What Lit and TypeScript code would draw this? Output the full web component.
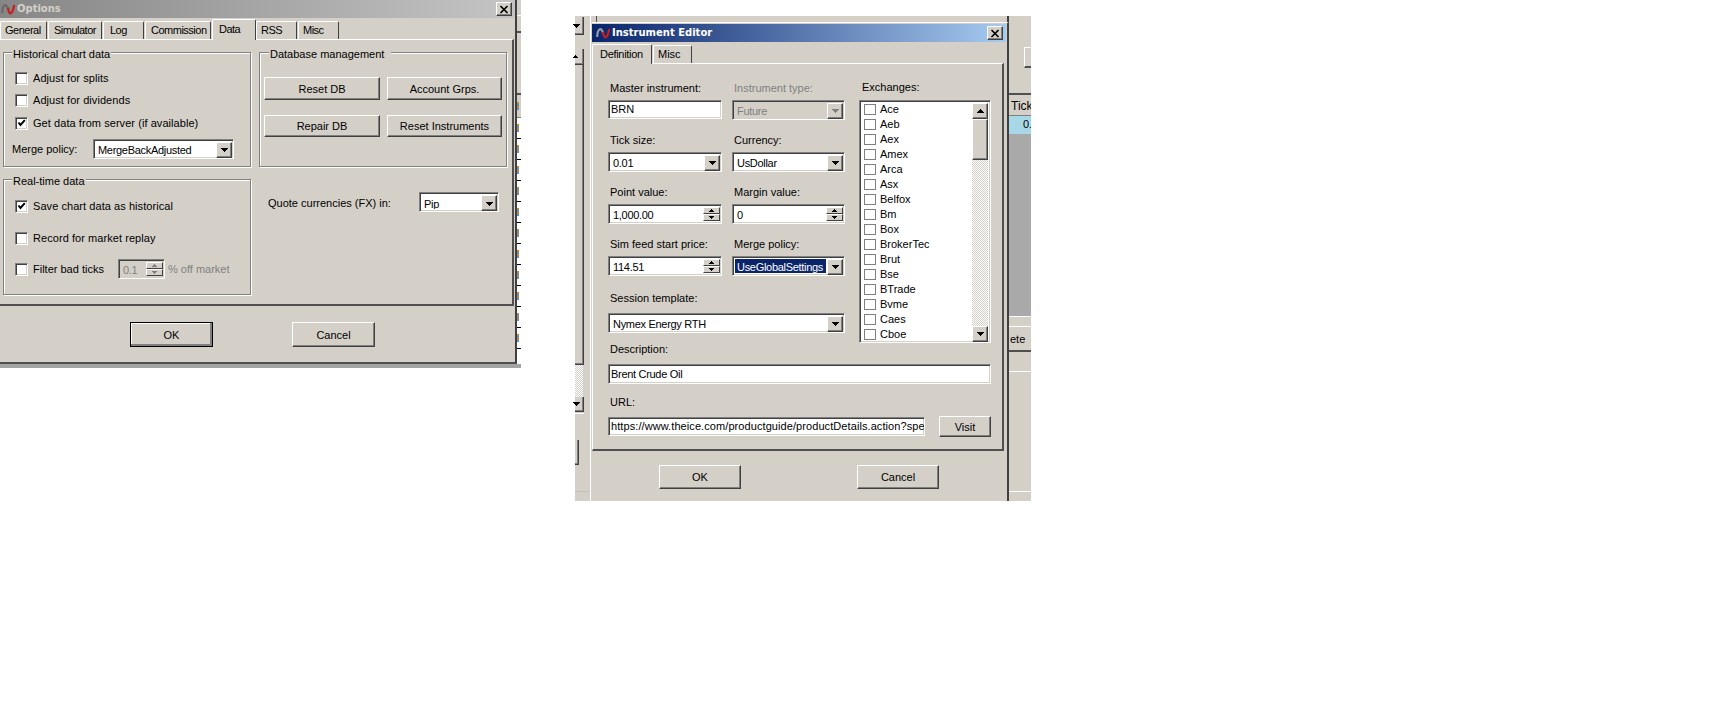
import { LitElement, html, css, TemplateResult } from "lit";
import { customElement } from "lit/decorators.js";

const EXCHANGES = ["Ace","Aeb","Aex","Amex","Arca","Asx","Belfox","Bm","Box","BrokerTec","Brut","Bse","BTrade","Bvme","Caes","Cboe"];
const OPT_TABS = [
  ["General", 47, 4], ["Simulator", 54, 5], ["Log", 41, 6], ["Commission", 66, 5],
];
const OPT_TABS2 = [["RSS", 41, 4], ["Misc", 41, 4]];

const tri = () => html`<svg class="tri" width="7" height="4" viewBox="0 0 7 4" shape-rendering="crispEdges"><path d="M0 0h7v1h-1v1h-1v1h-1v1h-1v-1h-1v-1h-1v-1h-1z"/></svg>`;
const triUp = () => html`<svg class="tri" width="7" height="4" viewBox="0 0 7 4" shape-rendering="crispEdges"><path d="M3 0h1v1h1v1h1v1h1v1h-7v-1h1v-1h1v-1h1z"/></svg>`;
const smallUp = () => html`<svg class="tri" width="5" height="3" viewBox="0 0 5 3" shape-rendering="crispEdges"><path d="M2 0h1v1h1v1h1v1h-5v-1h1v-1h1z"/></svg>`;
const smallDown = () => html`<svg class="tri" width="5" height="3" viewBox="0 0 5 3" shape-rendering="crispEdges"><path d="M0 0h5v1h-1v1h-1v1h-1v-1h-1v-1h-1z"/></svg>`;
const combo = (t: string, cls = "", sel = false) => html`<div class="combo inset ${cls}"><span class="ctext ${sel ? "sel" : ""}">${t}</span><span class="arrow raised">${tri()}</span></div>`;
const spin = (t: string, cls = "") => html`<div class="combo inset ${cls}"><span class="ctext">${t}</span><span class="spins"><span class="sb">${smallUp()}</span><span class="sb">${smallDown()}</span></span></div>`;
const field = (t: string, cls = "") => html`<div class="field inset ${cls}">${t}</div>`;
const check = (on: boolean) => html`<span class="cb inset">${on ? html`<svg width="9" height="9" viewBox="0 0 9 9"><path d="M1.5 3.5 L3.5 6 L7.8 1.2" fill="none" stroke="#000" stroke-width="2"/></svg>` : ""}</span>`;
const cbRow = (t: string, on: boolean, cls = ""): TemplateResult => html`<div class="cbrow ${cls}">${check(on)}<span>${t}</span></div>`;
const icon = (g: string) => html`<svg class="ico" width="15" height="14" viewBox="0 0 15 14"><path d="M1.2 11 C1.5 2 5.5 1 7 7" fill="none" stroke="${g}" stroke-width="2.2"/><path d="M7 6 C8 14 11.5 13 13.2 3" fill="none" stroke="#c8201c" stroke-width="2.2"/></svg>`;
const closeBtn = () => html`<span class="close raised"><svg width="10" height="9" viewBox="0 0 10 9"><path d="M1.5 1 L8.5 8 M8.5 1 L1.5 8" stroke="#000" stroke-width="1.7" fill="none"/></svg></span>`;

@customElement("app-root")
export class AppRoot extends LitElement {
  static styles = css`
    :host { display: block; width: 1711px; height: 727px; background: #fff; overflow: hidden;
      font: 11px/14px "Liberation Sans", Arial, sans-serif; color: #000; }
    * { box-sizing: border-box; }
    .desk { display: flex; align-items: flex-start; }
    .raised { border: 1px solid; border-color: #fff #404040 #404040 #fff;
      box-shadow: inset -1px -1px 0 #808080; background: #d4d0c8; }
    .inset { border: 1px solid; border-color: #808080 #fff #fff #808080;
      box-shadow: inset 1px 1px 0 #404040, inset -1px -1px 0 #d4d0c8; background: #fff; }
    .tri { display: block; fill: #000; }

    .shot1 { display: flex; width: 521px; align-items: flex-start; }
    .col1 { width: 517px; background: #a4a4a4; padding-bottom: 4px; }
    .win1 { background: #d4d0c8; height: 364px; border-right: 2px solid #404040; border-bottom: 2px solid #505050; }
    .title { display: flex; align-items: center; height: 18px; font: bold 10px/18px "DejaVu Sans", sans-serif; }
    .title.gray { background: linear-gradient(90deg, #868686, #c4c4c4); color: #d4d0c8; padding-left: 1px; }
    .title.blue { background: linear-gradient(90deg, #0a246a, #a6caf0); color: #fff; padding-left: 4px; margin-right: 1px; }
    .title .ico { flex: none; margin-right: 1px; }
    .title .ttl { flex: 1; }
    .close { width: 16px; height: 14px; margin-right: 3px; display: flex; align-items: center; justify-content: center; }
    .tabs { display: flex; height: 21px; align-items: flex-end; position: relative; z-index: 1; }
    .tab { height: 18px; background: #d4d0c8; border-top: 1px solid #fff; border-left: 1px solid #fff;
      border-right: 1px solid #404040; border-radius: 2px 2px 0 0; line-height: 17px; white-space: nowrap; flex: none; margin-right: 1px; }
    .tabs.tight .tab { letter-spacing: -0.5px; }
    .tab.on { height: 21px; margin-right: 0; margin-bottom: -1px; border-right-color: #404040; line-height: 18px; }
    .panel1 { width: 514px; height: 267px; border-top: 1px solid #fff; border-right: 2px solid #505050; border-bottom: 2px solid #505050;
      padding: 12px 0 0 3px; display: flex; gap: 8px; align-items: flex-start; }
    .gcol { width: 248px; display: flex; flex-direction: column; }
    .group { width: 248px; border: 1px solid #808080; box-shadow: inset 1px 1px 0 #fff, 1px 1px 0 #fff; padding-left: 11px; }
    .g115 { height: 115px; }
    .g116 { height: 116px; margin-top: 12px; }
    .legend { display: block; width: fit-content; margin: -6px 0 0 -3px; padding: 0 1px 0 1px; height: 14px; background: #d4d0c8; white-space: nowrap; }
    .legend.wide { padding-right: 7px; margin-left: -2px; }
    .cbrow { display: flex; align-items: center; height: 13px; line-height: 13px; white-space: nowrap; letter-spacing: 0.06px; }
    .cb { width: 13px; height: 13px; margin-right: 5px; flex: none; display: flex; align-items: center; justify-content: center; }
    .m11 { margin-top: 11px; } .m9 { margin-top: 9px; } .m10 { margin-top: 10px; } .m12 { margin-top: 12px; } .m19 { margin-top: 19px; }
    .mergerow { display: flex; align-items: center; margin: 9px 0 0 -3px; height: 20px; }
    .mergerow > span { width: 81px; }
    .combo { display: flex; height: 20px; padding: 2px 1px 2px 2px; align-items: stretch; flex: none; }
    .ctext { flex: 1; min-width: 0; padding-left: 2px; line-height: 16px; white-space: nowrap; overflow: hidden; letter-spacing: -0.3px; }
    .ctext.sel { background: #0a246a; color: #fff; margin-right: 1px; }
    .arrow { width: 16px; height: 16px; flex: none; display: flex; align-items: center; justify-content: center; }
    .spins { width: 17px; flex: none; display: flex; flex-direction: column; background: #d4d0c8; }
    .sb { height: 8px; display: flex; align-items: center; justify-content: center; border: 1px solid; border-color: #fff #404040 #404040 #fff; }
    .w141 { width: 141px; } .w80 { width: 80px; } .w47 { width: 47px; }
    .w114 { width: 114px; } .w113 { width: 113px; } .w237 { width: 237px; }
    .off { background: #d4d0c8; color: #808080; }
    .off .tri { fill: #808080; }
    .filter { display: flex; align-items: center; height: 20px; margin-top: 14px; white-space: nowrap; }
    .filter .ftxt { width: 85px; flex: none; line-height: 14px; }
    .filter .pct { margin-left: 3px; color: #808080; }
    .btngrid { display: grid; grid-template-columns: 116px 115px; grid-template-rows: 23px 22px; gap: 15px 7px; margin: 16px 0 0 -7px; }
    .btn { display: flex; align-items: center; justify-content: center; white-space: nowrap; flex: none; }
    .quote { display: grid; grid-template-columns: 151px 80px; align-items: center; margin: 25px 0 0 9px; }
    .quote span { padding-top: 1px; }
    .foot1 { display: flex; gap: 79px; padding: 16px 0 0 130px; }
    .dbtn { height: 25px; width: 83px; }
    .dbtn.def { outline: 1px solid #000; outline-offset: -1px; box-shadow: inset -2px -2px 0 #808080, inset 1px 1px 0 #fff; }
    .sliver { width: 4px; height: 368px; display: flex; flex-direction: column; overflow: hidden; }
    .s-top { height: 93px; background: #d4d0c8; padding-top: 15px; flex: none; }
    .s-top i { display: block; height: 18px; border-top: 1px solid #fff; border-bottom: 2px solid #505050; }
    .s-line { height: 2px; background: #505050; flex: none; }
    .s-head { height: 23px; background: #d4d0c8; border-bottom: 1px solid #808080; flex: none; padding-top: 7px; }
    .s-row { height: 21px; flex: none; border-bottom: 1px solid #000; padding-top: 6px; background: #fff; }
    .s-head i, .s-row i { display: block; width: 2px; height: 8px; background: repeating-linear-gradient(180deg, #c8842a 0 2px, #5a8fd0 2px 4px); }
    .s-fill { flex: 1; background: #fff; }
    .s-strip { height: 4px; flex: none; background: #a4a4a4; }

    .shot2 { display: flex; width: 456px; height: 485px; margin: 16px 0 0 54px; background: #d4d0c8; flex: none; }
    .lstrip { width: 16px; flex: none; border-right: 1px solid #fff; display: flex; flex-direction: column; height: 485px; }
    .lbox { width: 9px; border-right: 1px solid #404040; border-bottom: 1px solid #404040; box-shadow: inset -1px -1px 0 #808080; flex: none; display: flex; align-items: center; }
    .lbox .tri { margin-left: -2px; }
    .lb1 { height: 18px; margin-top: 1px; } .lb2 { height: 16px; margin-top: 14px; }
    .lb3 { height: 300px; border-left: 0; }
    .lchk { width: 8px; height: 32px; flex: none; background: repeating-conic-gradient(#d4d0c8 0 25%, #fff 0 50%) 0 0/2px 2px; }
    .lb4 { height: 15px; }
    .lwl { width: 9px; height: 1px; background: #fff; margin-top: 1px; flex: none; }
    .lb5 { width: 4px; height: 25px; margin-top: 26px; }
    .lgl { width: 15px; height: 1px; background: #c0c0c0; margin-top: 26px; flex: none; }
    .rmain { width: 418px; flex: none; display: flex; flex-direction: column; }
    .rtop { height: 6px; border-right: 2px solid #404040; }
    .rtop i { display: block; width: 1px; height: 6px; margin-left: 5px; background: #505050; }
    .win2 { height: 479px; border-top: 1px solid #fff; border-left: 1px solid #d4d0c8; border-right: 2px solid #404040; padding-top: 1px; background: #d4d0c8; }
    .panel2 { width: 412px; height: 388px; border-top: 1px solid #fff; border-left: 1px solid #fff; border-right: 2px solid #505050; border-bottom: 2px solid #505050; padding: 17px 0 0 15px; }
    .upper { display: flex; align-items: flex-start; }
    .fgrid { width: 237px; display: grid; grid-template-columns: 114px 113px; column-gap: 10px; row-gap: 13px; }
    .cell label, .blabel { display: block; height: 14px; padding-left: 2px; margin-bottom: 5px; white-space: nowrap; }
    .cell label.dis { color: #808080; }
    .blabel.b8 { margin-bottom: 8px; }
    .sess { margin-top: 15px; }
    .exch { width: 132px; margin: -1px 0 -1px 14px; flex: none; }
    .exch label { display: block; height: 14px; padding-left: 3px; margin-bottom: 6px; }
    .list { height: 243px; display: flex; padding: 2px; overflow: hidden; }
    .rows { flex: 1; min-width: 0; height: 239px; overflow: hidden; padding-top: 0; }
    .rows > div:first-child { margin-top: -1px; }
    .lrow { height: 15px; display: flex; align-items: center; padding-left: 2px; white-space: nowrap; line-height: 15px; }
    .lrow i { width: 12px; height: 11px; border: 1px solid #808080; background: #fff; margin-right: 4px; flex: none; }
    .sbar { width: 16px; flex: none; display: flex; flex-direction: column; height: 239px; background: repeating-conic-gradient(#d4d0c8 0 25%, #fff 0 50%) 0 0/2px 2px; }
    .sbtn { height: 16px; flex: none; display: flex; align-items: center; justify-content: center; }
    .thumb { height: 41px; flex: none; }
    .sgap { flex: 1; }
    .desc { width: 383px; height: 20px; letter-spacing: -0.3px; }
    .field { height: 20px; padding: 2px 0 0 2px; line-height: 15px; white-space: nowrap; overflow: hidden; }
    .field.h19 { height: 19px; padding-top: 1px; }
    .urlrow { display: flex; align-items: center; width: 383px; height: 21px; margin-top: -1px; }
    .url { width: 317px; height: 19px; padding: 1px 2px 0 2px; letter-spacing: 0.08px; }
    .visit { width: 52px; height: 21px; margin-left: 14px; }
    .mt11 { margin-top: 11px; }
    .foot2 { display: flex; gap: 116px; padding: 14px 0 0 67px; }
    .dbtn2 { width: 82px; height: 24px; }

    .rstrip { width: 22px; height: 485px; flex: none; display: flex; flex-direction: column; overflow: hidden; white-space: nowrap; }
    .rs-top { height: 77px; flex: none; padding: 31px 0 0 15px; }
    .rs-top i { display: block; width: 7px; height: 21px; border-top: 1px solid #fff; border-left: 1px solid #fff; border-bottom: 2px solid #505050; }
    .rs-line { height: 2px; flex: none; background: #505050; }
    .rs-head { height: 21px; flex: none; padding: 2px 0 0 2px; line-height: 18px; font-size: 12px; border-bottom: 1px solid #808080; }
    .rs-blue { height: 18px; flex: none; background: #a8d8e8; padding-left: 14px; line-height: 17px; }
    .rs-grey { height: 183px; flex: none; background: #a9a9a9; border-bottom: 1px solid #fff; }
    .rs-g2 { height: 10px; flex: none; border-bottom: 1px solid #fff; }
    .rs-ete { height: 23px; flex: none; padding-left: 1px; line-height: 24px; }
    .rs-dark { height: 2px; flex: none; background: #505050; }
    .rs-g3 { height: 20px; flex: none; border-bottom: 1px solid #fff; }
    .rs-g4 { height: 120px; flex: none; border-bottom: 1px solid #fff; }
  `;

  private tabs1() {
    return html`<div class="tabs tight">
      ${OPT_TABS.map(([t, w, p]) => html`<div class="tab" style="width:${w}px;padding-left:${p}px">${t}</div>`)}
      <div class="tab on" style="width:44px;padding-left:6px">Data</div>
      ${OPT_TABS2.map(([t, w, p]) => html`<div class="tab" style="width:${w}px;padding-left:${p}px">${t}</div>`)}
    </div>`;
  }

  private options() {
    return html`<div class="shot1">
      <div class="col1"><div class="win1">
        <div class="title gray">${icon("#6a6a6a")}<span class="ttl">Options</span>${closeBtn()}</div>
        ${this.tabs1()}
        <div class="panel1">
          <div class="gcol">
            <div class="group g115">
              <span class="legend">Historical chart data</span>
              ${cbRow("Adjust for splits", false, "m11")}
              ${cbRow("Adjust for dividends", false, "m9")}
              ${cbRow("Get data from server (if available)", true, "m10")}
              <div class="mergerow"><span>Merge policy:</span>${combo("MergeBackAdjusted", "w141")}</div>
            </div>
            <div class="group g116">
              <span class="legend">Real-time data</span>
              ${cbRow("Save chart data as historical", true, "m12")}
              ${cbRow("Record for market replay", false, "m19")}
              <div class="filter">${check(false)}<span class="ftxt">Filter bad ticks</span>${spin("0.1", "w47 off")}<span class="pct">% off market</span></div>
            </div>
          </div>
          <div class="gcol">
            <div class="group g115">
              <span class="legend wide">Database management</span>
              <div class="btngrid">
                <div class="btn raised">Reset DB</div><div class="btn raised">Account Grps.</div>
                <div class="btn raised">Repair DB</div><div class="btn raised">Reset Instruments</div>
              </div>
            </div>
            <div class="quote"><span>Quote currencies (FX) in:</span>${combo("Pip", "w80")}</div>
          </div>
        </div>
        <div class="foot1">
          <div class="btn raised dbtn def">OK</div>
          <div class="btn raised dbtn">Cancel</div>
        </div>
      </div></div>
      <div class="sliver">
        <div class="s-top"><i></i></div><div class="s-line"></div><div class="s-head"><i></i></div>
        ${Array.from({ length: 11 }, () => html`<div class="s-row"><i></i></div>`)}
        <div class="s-fill"></div>
        <div class="s-strip"></div>
      </div>
    </div>`;
  }

  private editor() {
    return html`<div class="shot2">
      <div class="lstrip">
        <div class="lbox lb1">${tri()}</div>
        <div class="lbox lb2">${smallUp()}</div>
        <div class="lbox lb3"></div>
        <div class="lchk"></div>
        <div class="lbox lb4">${tri()}</div>
        <div class="lwl"></div>
        <div class="lbox lb5"></div>
        <div class="lgl"></div>
      </div>
      <div class="rmain">
        <div class="rtop"><i></i></div>
        <div class="win2">
          <div class="title blue">${icon("#9a9aa8")}<span class="ttl">Instrument Editor</span>${closeBtn()}</div>
          <div class="tabs">
            <div class="tab on" style="width:60px;padding-left:7px;height:20px;letter-spacing:-0.3px">Definition</div>
            <div class="tab" style="width:39px;padding-left:4px;margin-left:1px">Misc</div>
          </div>
          <div class="panel2">
            <div class="upper">
              <div>
                <div class="fgrid">
                  <div class="cell"><label>Master instrument:</label>${field("BRN", "h19")}</div>
                  <div class="cell"><label class="dis">Instrument type:</label>${combo("Future", "w113 off")}</div>
                  <div class="cell"><label>Tick size:</label>${combo("0.01", "w114")}</div>
                  <div class="cell"><label>Currency:</label>${combo("UsDollar", "w113")}</div>
                  <div class="cell"><label>Point value:</label>${spin("1,000.00", "w114")}</div>
                  <div class="cell"><label>Margin value:</label>${spin("0", "w113")}</div>
                  <div class="cell"><label>Sim feed start price:</label>${spin("114.51", "w114")}</div>
                  <div class="cell"><label>Merge policy:</label>${combo("UseGlobalSettings", "w113", true)}</div>
                </div>
                <div class="sess"><div class="blabel b8">Session template:</div>${combo("Nymex Energy RTH", "w237")}</div>
              </div>
              <div class="exch">
                <label>Exchanges:</label>
                <div class="list inset">
                  <div class="rows">${EXCHANGES.map((e) => html`<div class="lrow"><i></i>${e}</div>`)}</div>
                  <div class="sbar">
                    <div class="sbtn raised">${triUp()}</div>
                    <div class="thumb raised"></div>
                    <div class="sgap"></div>
                    <div class="sbtn raised">${tri()}</div>
                  </div>
                </div>
              </div>
            </div>
            <div class="blabel b8">Description:</div>
            ${field("Brent Crude Oil", "desc")}
            <div class="blabel b8 mt11">URL:</div>
            <div class="urlrow">
              ${field("https://www.theice.com/productguide/productDetails.action?specId=254", "url")}
              <div class="btn raised visit">Visit</div>
            </div>
          </div>
          <div class="foot2">
            <div class="btn raised dbtn2">OK</div>
            <div class="btn raised dbtn2">Cancel</div>
          </div>
        </div>
      </div>
      <div class="rstrip">
        <div class="rs-top"><i></i></div>
        <div class="rs-line"></div>
        <div class="rs-head">Tick</div>
        <div class="rs-blue">0.</div>
        <div class="rs-grey"></div>
        <div class="rs-g2"></div>
        <div class="rs-ete">ete</div>
        <div class="rs-dark"></div>
        <div class="rs-g3"></div>
        <div class="rs-g4"></div>
      </div>
    </div>`;
  }

  render() {
    return html`<div class="desk">${this.options()}${this.editor()}</div>`;
  }
}
